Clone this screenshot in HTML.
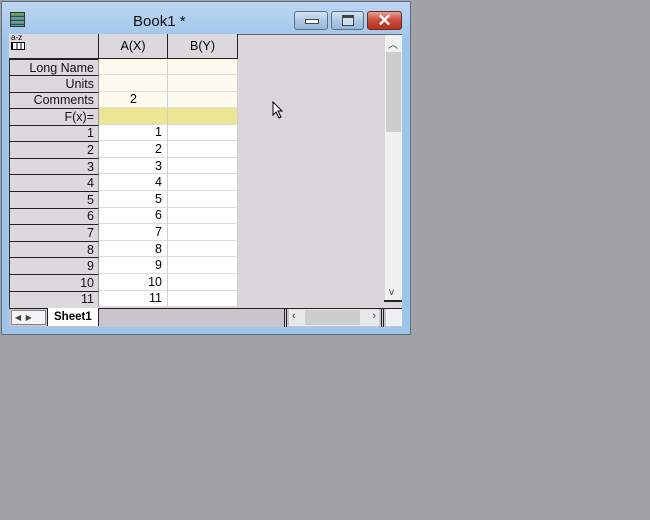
<!DOCTYPE html>
<html><head><style>
*{margin:0;padding:0;box-sizing:border-box}
body{width:650px;height:520px;background:#a3a2a7;position:relative;overflow:hidden;font-family:"Liberation Sans",sans-serif;font-size:12px;color:#000}
.a{position:absolute}
.win{left:1px;top:1px;width:410px;height:334px;background:linear-gradient(#bcd6f2,#9fc4ea 40px);border:1px solid #5e6e80}
.c{position:absolute;display:flex;align-items:center}
.rh{background:#dcd8de;border-top:1px solid #222;border-right:1px solid #999;border-left:1px solid #333;justify-content:flex-end;padding-right:4px;color:#111;font-size:12.5px}
.cell{border-right:1px solid #d0d0d0;border-bottom:1px solid #dcdcdc;justify-content:flex-end;padding-right:5px;font-size:12.5px}
.btn{top:11px;height:19px;border:1px solid #5d6f84;border-radius:3px;background:linear-gradient(#d4e4f4,#aec8e4 50%,#98b6d6)}
</style></head><body>
<div class="a win"></div>
<div class="a" style="left:10px;top:12px;width:15px;height:15px;border:1px solid #333;background:repeating-linear-gradient(#3c3 0 2px,#c4c 2px 3px,#33c 3px 4px)"></div>
<div class="a" style="left:133px;top:13px;font-size:15px;color:#111">Book1 *</div>
<div class="a btn" style="left:294px;width:34px"><div class="a" style="left:10px;top:7px;width:14px;height:5px;background:#fff;border:1px solid #444"></div></div>
<div class="a btn" style="left:331px;width:33px"><div class="a" style="left:10px;top:3px;width:12px;height:11px;border:1px solid #444;border-top-width:3px;background:#cde"></div></div>
<div class="a btn" style="left:367px;width:35px;background:linear-gradient(#e8a090,#c84a3a 50%,#b83020);border-color:#6a2a22;color:#fff;font-size:17px;font-weight:bold;text-align:center;line-height:17px">✕</div>
<div class="a" style="left:9px;top:34px;width:393px;height:293px;background:#dcd6dc;border-left:1px solid #666;border-top:1px solid #666"></div>
<div class="c" style="left:9px;top:34px;width:90px;height:25px;background:#dcd8de;border-right:1px solid #222;border-bottom:1px solid #222;align-items:flex-start;justify-content:flex-start;padding-left:2px;font-size:8px;line-height:8px;flex-direction:column">a-z<span style="display:block;width:14px;height:8px;border:1px solid #000;background:repeating-linear-gradient(90deg,#000 0 1px,#fff 1px 4.3px)"></span></div>
<div class="c" style="left:99px;top:34px;width:69px;height:25px;background:#dcd8de;border-right:1px solid #222;border-bottom:1px solid #222;justify-content:center;font-size:12.5px">A(X)</div>
<div class="c" style="left:168px;top:34px;width:70px;height:25px;background:#dcd8de;border-right:1px solid #222;border-bottom:1px solid #222;justify-content:center;font-size:12.5px">B(Y)</div>
<div id="g"></div>
<div class="a" style="left:385px;top:35px;width:17px;height:265px;background:#f0f0f0"></div>
<div class="a" style="left:386px;top:52px;width:15px;height:80px;background:#cdcdcd"></div>
<div class="a" style="left:388px;top:36px;font-size:10px;color:#444">︿</div>
<div class="a" style="left:389px;top:287px;font-size:10px;color:#444">v</div>
<div class="a" style="left:384px;top:300px;width:18px;height:2px;background:#222"></div>
<div class="a" style="left:9px;top:308px;width:393px;height:19px;background:#c8c6cc;border-top:1px solid #222"></div>
<div class="a" style="left:11px;top:310px;width:35px;height:15px;background:#f4f4f4;border:1px solid #888;font-size:8px;color:#444;line-height:13px;padding-left:3px">◀ &nbsp;▶</div>
<div class="a" style="left:47px;top:308px;width:52px;height:18px;background:#fff;border-left:1px solid #222;border-right:1px solid #222;font-weight:bold;font-size:11.5px;padding:3px 0 0 6px">Sheet1</div>
<div class="a" style="left:284px;top:309px;width:3px;height:18px;border-left:1px solid #222;border-right:1px solid #222"></div>
<div class="a" style="left:289px;top:309px;width:90px;height:17px;background:#e8e8e8;font-size:11px;color:#444;padding:1px 3px">‹<span style="float:right">›</span></div>
<div class="a" style="left:305px;top:310px;width:55px;height:15px;background:#cdcdcd"></div>
<div class="a" style="left:381px;top:309px;width:3px;height:18px;border-left:1px solid #222;border-right:1px solid #222"></div>
<div class="a" style="left:386px;top:309px;width:16px;height:17px;background:#efefef"></div>
<svg class="a" style="left:272px;top:101px" width="12" height="18"><path d="M1 1 L1 14 L4 11 L7 17 L9 16 L6 10 L10 10 Z" fill="#fff" stroke="#000" stroke-width="1"/></svg>
<script>
var g=document.getElementById('g'),h='';
var rows=[['Long Name','',"#fdfaee"],['Units','',"#fdfaee"],['Comments','2',"#fdfaee"],['F(x)=','',"#ece592"]];
for(var i=1;i<=11;i++)rows.push([i,i,"#fff"]);
var y=59;
rows.forEach(function(r,k){var hh=k<4?16.4:16.6;
h+='<div class="c rh" style="left:9px;top:'+y+'px;width:90px;height:'+hh+'px">'+r[0]+'</div>';
var al=k==2?'justify-content:flex-start;padding-left:31px;':'';
h+='<div class="c cell" style="left:99px;top:'+y+'px;width:69px;height:'+hh+'px;background:'+r[2]+';'+al+'">'+r[1]+'</div>';
h+='<div class="c cell" style="left:168px;top:'+y+'px;width:70px;height:'+hh+'px;background:'+r[2]+'"></div>';
y+=hh;});
g.innerHTML=h;
</script>
</body></html>
